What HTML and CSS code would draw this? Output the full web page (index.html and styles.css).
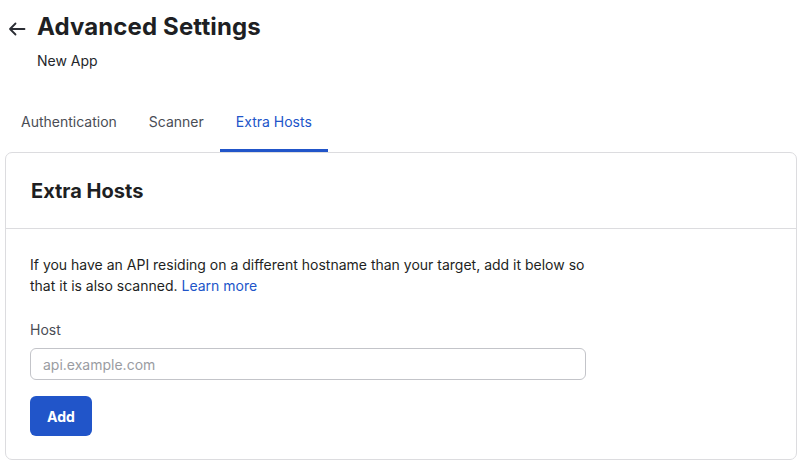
FILE: index.html
```html
<!DOCTYPE html>
<html>
<head>
<meta charset="utf-8">
<link rel="stylesheet" href="styles.css">
</head>
<body>
<div class="page">
  <header class="header">
    <span class="back">
      <svg width="18" height="18" viewBox="0 0 18 18" fill="none" stroke="#2a2c33" stroke-width="1.8" stroke-linecap="round" stroke-linejoin="round"><path d="M16.5 9H2M7.5 3.5L2 9L7.5 14.5"/></svg>
    </span>
    <div class="titles">
      <h1 class="title">Advanced Settings</h1>
      <div class="subtitle">New App</div>
    </div>
  </header>
  <nav class="tabs">
    <div class="tab">Authentication</div>
    <div class="tab">Scanner</div>
    <div class="tab active">Extra Hosts</div>
  </nav>
  <section class="card">
    <div class="card-head"><h2 class="card-title">Extra Hosts</h2></div>
    <div class="card-body">
      <p class="desc">If you have an API residing on a different hostname than your target, add it below so that it is also scanned. <a class="link" href="#">Learn more</a></p>
      <label class="label">Host</label>
      <input class="input" type="text" placeholder="api.example.com">
      <button class="btn">Add</button>
    </div>
  </section>
</div>
</body>
</html>
```
FILE: styles.css
```css
* { box-sizing: border-box; }
html, body { margin: 0; padding: 0; background: #fff; }
body { font-family: Inter, "Noto Sans", sans-serif; color: #1e1f23; }
.page { padding: 0 5px; }
.header { display: flex; align-items: flex-start; padding: 12px 0 0 3px; }
.back { width: 29px; display: flex; padding-top: 8px; }
.title { margin: 0; font-size: 24px; font-weight: 700; line-height: 30px; letter-spacing: 0.12px; color: #1e1f23; }
.subtitle { font-size: 14px; line-height: 20px; margin-top: 9px; color: #24262b; }
.tabs { display: flex; margin-top: 41px; }
.tab { padding: 0 16px; height: 40px; line-height: 20px; padding-top: 0; font-size: 14px; color: #4a4d55; border-bottom: 3px solid transparent; }
.tab.active { color: #2155c9; border-bottom-color: #2155c9; }
.card { border: 1px solid #dcdcdf; border-radius: 7px; height: 308px; }
.card-head { height: 76px; border-bottom: 1px solid #dcdcdf; display: flex; align-items: center; padding: 0 25px; }
.card-title { margin: 0; font-size: 20px; font-weight: 700; color: #1e1f23; line-height: 26px; }
.card-body { padding: 25px 24px 0 24px; display: flex; flex-direction: column; align-items: flex-start; }
.desc { margin: 0; max-width: 566px; font-size: 14px; line-height: 21px; color: #1e1f23; }
.link { color: #2155c9; text-decoration: none; }
.label { margin-top: 24px; font-size: 14px; line-height: 20px; color: #4a4d55; }
.input { margin-top: 8px; width: 556px; height: 32px; border: 1px solid #c3c4c9; border-radius: 6px; padding: 0 12px; font: 14px Inter, sans-serif; color: #1e1f23; outline: none; }
.input::placeholder { color: #9a9ca2; }
.btn { margin-top: 16px; width: 62px; height: 40px; border: none; border-radius: 6px; background: #2155c9; color: #fff; font: 700 14px Inter, sans-serif; cursor: pointer; }
```
